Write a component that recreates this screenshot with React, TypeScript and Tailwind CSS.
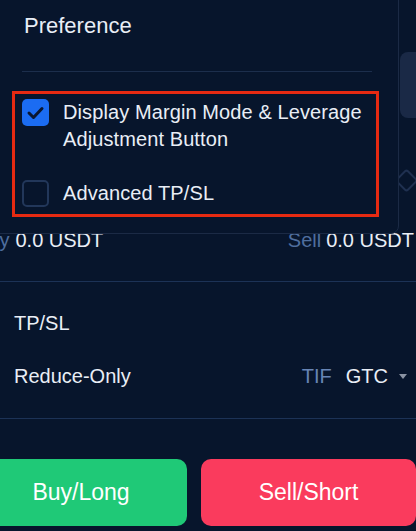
const font = { fontFamily: '"Liberation Sans", Arial, sans-serif' };

function Box({ checked }: { checked: boolean }) {
  if (checked) {
    return (
      <span className="flex h-[27px] w-[27px] shrink-0 items-center justify-center rounded-[5px] bg-[#1b6cf2]">
        <svg width="27" height="27" viewBox="0 0 27 27" fill="none">
          <path d="M7 14l4.5 4.5L20 9.5" stroke="#0a1630" strokeWidth="3" strokeLinecap="round" strokeLinejoin="round" />
        </svg>
      </span>
    );
  }
  return <span className="h-[27px] w-[27px] shrink-0 rounded-[5px] border-2 border-[#22375a]" />;
}

export default function App() {
  return (
    <div className="relative h-[531px] w-[416px] overflow-hidden bg-[#07152c] text-[#e9eef6]" style={font}>
      {/* trading panel underneath */}
      <div className="ml-[-25px] w-[441px]">
        <div className="flex h-[228px] flex-col items-end pt-[52px]">
          <div className="mr-[-24px] h-[66px] w-[40px] rounded-[8px] bg-[#1a2946]" />
          <div className="mr-[1.5px] mt-[53.5px] h-[17px] w-[17px] rotate-45 rounded-[3px] border-2 border-[#1f3050]" />
        </div>

        <div className="flex h-[24px] items-center justify-between text-[20px] leading-[24px]">
          <div className="flex gap-[6px]">
            <span className="text-[#4f6e9e]">Buy</span>
            <span>0.0 USDT</span>
          </div>
          <div className="mr-[2px] flex gap-[5px]">
            <span className="text-[#4f6e9e]">Sell</span>
            <span>0.0 USDT</span>
          </div>
        </div>

        <div className="mt-[29px] h-px bg-[#1c3256]" />

        <div className="mt-[29px] flex h-[24px] items-center gap-[17px] text-[20px] leading-[24px]">
          <span className="h-[22px] w-[22px] rounded-[4px] border-2 border-[#22375a]" />
          <span>TP/SL</span>
        </div>

        <div className="mt-[29px] flex h-[24px] items-center justify-between text-[20px] leading-[24px]">
          <div className="flex items-center gap-[17px]">
            <span className="h-[22px] w-[22px] rounded-[4px] border-2 border-[#22375a]" />
            <span>Reduce-Only</span>
          </div>
          <div className="flex items-center">
            <span className="text-[#6785b5]">TIF</span>
            <span className="ml-[14px]">GTC</span>
            <svg className="ml-[11px] mr-[9px]" width="8" height="5" viewBox="0 0 8 5">
              <path d="M0 0h8L4 5z" fill="#8a93a3" />
            </svg>
          </div>
        </div>

        <div className="mt-[30px] h-px bg-[#1c3256]" />

        <div className="mt-[40px] grid grid-cols-[212px_1fr] gap-[14px]">
          <button className="h-[67px] rounded-[10px] bg-[#1fc977] text-[23px] text-white">Buy/Long</button>
          <button className="h-[67px] rounded-[10px] bg-[#fa3b5d] text-[23px] text-white">Sell/Short</button>
        </div>
      </div>

      {/* preference popover */}
      <div className="absolute -left-px -top-px h-[235px] w-[400px] rounded-br-[8px] border border-[#1b2a45] bg-[#07152c]">
        <div className="pl-[24px] pt-[11px] text-[22px] leading-[30px]">Preference</div>
        <div className="ml-[22px] mt-[30px] h-px w-[350px] bg-[#1c2e4c]" />
        <div className="ml-[12px] mt-[19px] h-[126px] w-[367px] border-[3px] border-[#e62a12] pl-[7px] pr-[4px] pt-[5px]">
          <div className="flex gap-[14px]">
            <Box checked />
            <span className="text-[20px] leading-[27px] tracking-[0.1px]">
              Display Margin Mode &amp; Leverage Adjustment Button
            </span>
          </div>
          <div className="mt-[27px] flex gap-[14px]">
            <Box checked={false} />
            <span className="text-[20px] leading-[27px] tracking-[0.1px]">Advanced TP/SL</span>
          </div>
        </div>
      </div>
    </div>
  );
}
